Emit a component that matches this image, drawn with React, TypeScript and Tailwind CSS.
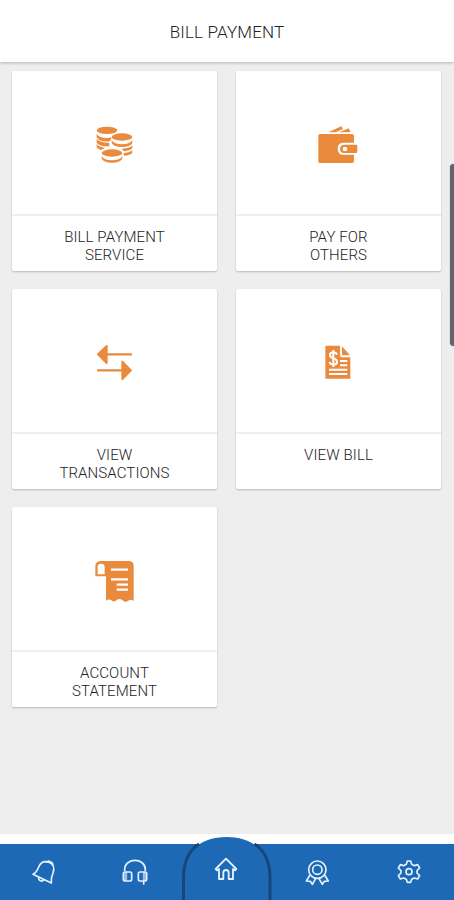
import type { ReactNode } from "react";

type Tile = {
  id: number;
  lines: string[];
  icon: ReactNode;
};

const CoinsIcon = () => (
  <svg viewBox="0 0 180 180" className="h-[60px] w-[60px]" fill="#e98a3c">
    <ellipse cx="69" cy="46" rx="31" ry="11" />
    <path d="M38 56q7 13 31 13 9 0 14-2l-5 12q-32 3-40-12zM38 72q8 11 38 12v10q-30 1-38-11zM38 87q7 10 25 11l-12 7q-10-3-13-8z" />
    <ellipse cx="114" cy="66" rx="31" ry="11" />
    <path d="M83 76q8 12 31 12t31-12v8q-6 12-31 12t-31-12zM113 101q24 0 32-10v8q-5 8-25 10zM119 114q19-1 26-9v8q-6 8-25 9z" />
    <ellipse cx="84" cy="114" rx="31" ry="11" />
    <path d="M53 123q7 13 31 13t31-13v8q-7 12-31 12t-31-12z" />
  </svg>
);

const WalletIcon = () => (
  <svg viewBox="0 0 180 180" className="h-[60px] w-[60px]" fill="#e98a3c">
    <path d="M61 52l39-18 5 8-22 10zM94 52l28-12 6 12z" />
    <path d="M36 57h96q6 0 6 6v20h-32q-17 0-17 18t17 18h32v19q0 6-6 6H36q-5 0-5-5V62q0-5 5-5z" />
    <path fillRule="evenodd" d="M108 89h36q4 0 4 4v17q0 4-4 4h-36q-12 0-12-12t12-13zm3 6a7 7 0 100 14 7 7 0 000-14z" />
  </svg>
);

const TransferIcon = () => (
  <svg viewBox="0 0 180 180" className="h-[60px] w-[60px]" fill="#e98a3c" stroke="#e98a3c" strokeLinejoin="round" strokeLinecap="round" strokeWidth="6">
    <path d="M42 64l26-25v51zM141 112l-26-26v52z" />
    <path d="M70 64h71M42 112h76" strokeWidth="7" />
  </svg>
);

const BillIcon = () => (
  <svg viewBox="0 0 180 180" className="h-[60px] w-[60px]" fill="#e98a3c">
    <path d="M55 38h41v29q0 6 6 6h25v64H52V41q0-3 3-3z" />
    <path d="M102 40l24 27h-21q-3 0-3-3z" />
    <path d="M96 84h22M96 97h22M63 110h55M63 123h55" stroke="#fff" strokeWidth="6" />
    <path d="M87 65q-3-7-11-7-10 0-10 8 0 7 10 10 11 3 11 11 0 8-11 8-9 0-12-8M76 51v51" fill="none" stroke="#fff" strokeWidth="6" />
  </svg>
);

const StatementIcon = () => (
  <svg viewBox="0 0 180 180" className="h-[60px] w-[60px]">
    <path d="M50 30h86q13 1 13 14v106q-9-8-17 0-9 5-14-1-12-10-23 0-7 5-13-1-8-6-16 1V76H34V46q0-15 16-16z" fill="#e98a3c" />
    <path d="M41 70V48q0-10 10-10 11 0 11 10v22z" fill="#fff" />
    <path d="M81 56h51M81 85h51M98 101h34M98 116h34" stroke="#fff" strokeWidth="6.5" />
  </svg>
);

const tiles: Tile[] = [
  { id: 1, lines: ["BILL PAYMENT", "SERVICE"], icon: <CoinsIcon /> },
  { id: 2, lines: ["PAY FOR", "OTHERS"], icon: <WalletIcon /> },
  { id: 3, lines: ["VIEW", "TRANSACTIONS"], icon: <TransferIcon /> },
  { id: 4, lines: ["VIEW BILL"], icon: <BillIcon /> },
  { id: 5, lines: ["ACCOUNT", "STATEMENT"], icon: <StatementIcon /> },
];

const BellIcon = () => (
  <svg viewBox="0 0 90 90" className="h-[30px] w-[30px]" fill="none" stroke="#e4f2ff" strokeWidth="5" strokeLinejoin="round" strokeLinecap="round">
    <path d="M12 55c10-5 13-11 17-22 6-14 18-19 31-14 14 6 17 19 12 32-4 9-7 16-5 30z" />
    <path d="M29 64c-1 10 9 15 16 7M52 18l7-3 11 6 1 6" />
  </svg>
);

const HeadsetIcon = () => (
  <svg viewBox="0 0 90 90" className="h-[30px] w-[30px]" fill="none" stroke="#e4f2ff" strokeWidth="5" strokeLinejoin="round">
    <path d="M14 46V41C14 4 76 4 76 41v5" />
    <rect x="10" y="48" width="25" height="27" rx="5" />
    <rect x="55" y="48" width="25" height="27" rx="5" />
    <path d="M17 49v25M73 49v25" strokeWidth="9" opacity=".65" />
    <path d="M71 75v11" />
  </svg>
);

const HomeIcon = () => (
  <svg viewBox="0 0 90 90" className="h-[30px] w-[30px]" fill="none" stroke="#e4f2ff" strokeWidth="5.5" strokeLinejoin="round">
    <path d="M14 45l31-31 31 31-4 4-6-4v30H53V56q0-8-8-8t-8 8v19H24V45l-6 4z" />
  </svg>
);

const AwardIcon = () => (
  <svg viewBox="0 0 90 90" className="h-[30px] w-[30px]" fill="none" stroke="#e4f2ff" strokeWidth="5" strokeLinejoin="round">
    <circle cx="46" cy="41" r="26" />
    <circle cx="46" cy="41" r="14" />
    <path d="M24 57L13 75l12 1 6 9 10-17M68 57l11 18-12 1-6 9-10-17" />
  </svg>
);

const GearIcon = () => (
  <svg viewBox="0 0 90 90" className="h-[30px] w-[30px]" fill="none" stroke="#e4f2ff" strokeWidth="5" strokeLinejoin="round">
    <path d="M40 18h10l3 10 8 4 10-3 6 10-8 8v7l8 8-6 10-10-3-8 4-3 9H40l-3-9-8-4-10 3-6-10 8-8v-7l-8-8 6-10 10 3 8-4z" />
    <circle cx="45" cy="50" r="9" />
  </svg>
);

const TileCard = ({ tile }: { tile: Tile }) => (
  <button className="flex h-[200px] flex-col rounded-[2px] bg-white shadow-[0_1px_2px_rgba(0,0,0,0.22)]">
    <span className="flex h-[145px] w-full border-b-2 border-[#eeeeee] pl-[72px] pt-[44px]">
      {tile.icon}
    </span>
    <span className="w-full pt-[12px] text-center text-[15px] font-light leading-[18px] tracking-[0.1px]">
      {tile.lines.map((line) => (
        <span key={line} className="block">{line}</span>
      ))}
    </span>
  </button>
);

const App = () => {
  return (
    <div className="relative flex h-[900px] w-[454px] flex-col overflow-hidden bg-[#eeeeee] font-[Roboto,sans-serif] text-[#222222]">
      <header className="flex h-[62px] shrink-0 items-center justify-center bg-white pt-[3px] shadow-[0_1px_3px_rgba(0,0,0,0.25)]">
        <h1 className="text-[17px] font-light tracking-[0.15px]">BILL PAYMENT</h1>
      </header>

      <main className="grid flex-1 grid-cols-[205px_205px] content-start gap-x-[19px] gap-y-[18px] pl-[12px] pt-[9px]">
        {tiles.map((tile) => (
          <TileCard key={tile.id} tile={tile} />
        ))}
      </main>

      <div className="absolute left-[450px] top-[164px] h-[182px] w-[8px] rounded-[5px] bg-[#63636b] shadow-[0_0_1px_#555555]" />

      <div className="h-[10px] shrink-0 bg-white" />
      <nav className="relative flex h-[56px] shrink-0 bg-[#1d69b5]">
        <svg viewBox="0 0 90 64" className="absolute -top-2 left-[182px] h-[64px] w-[90px]">
          <path d="M1.5 64V42C1.5 16 18 1 44.500 1S88 16 88 42v22z" fill="#1d69b5" />
          <path d="M1.500 64V42Q1.500 18 17 8M88 64V42Q88 18 72.500 8" fill="none" stroke="#174779" strokeWidth="3" />
        </svg>
        <div className="relative grid w-full grid-cols-5 justify-items-center pr-px pt-[12px]">
          <button className="relative -left-px h-[30px]"><BellIcon /></button>
          <button className="relative -left-px h-[30px]"><HeadsetIcon /></button>
          <button className="relative -top-[2px] h-[30px]"><HomeIcon /></button>
          <button className="h-[30px]"><AwardIcon /></button>
          <button className="relative left-px -top-px h-[30px]"><GearIcon /></button>
        </div>
      </nav>
    </div>
  );
};

export default App;
